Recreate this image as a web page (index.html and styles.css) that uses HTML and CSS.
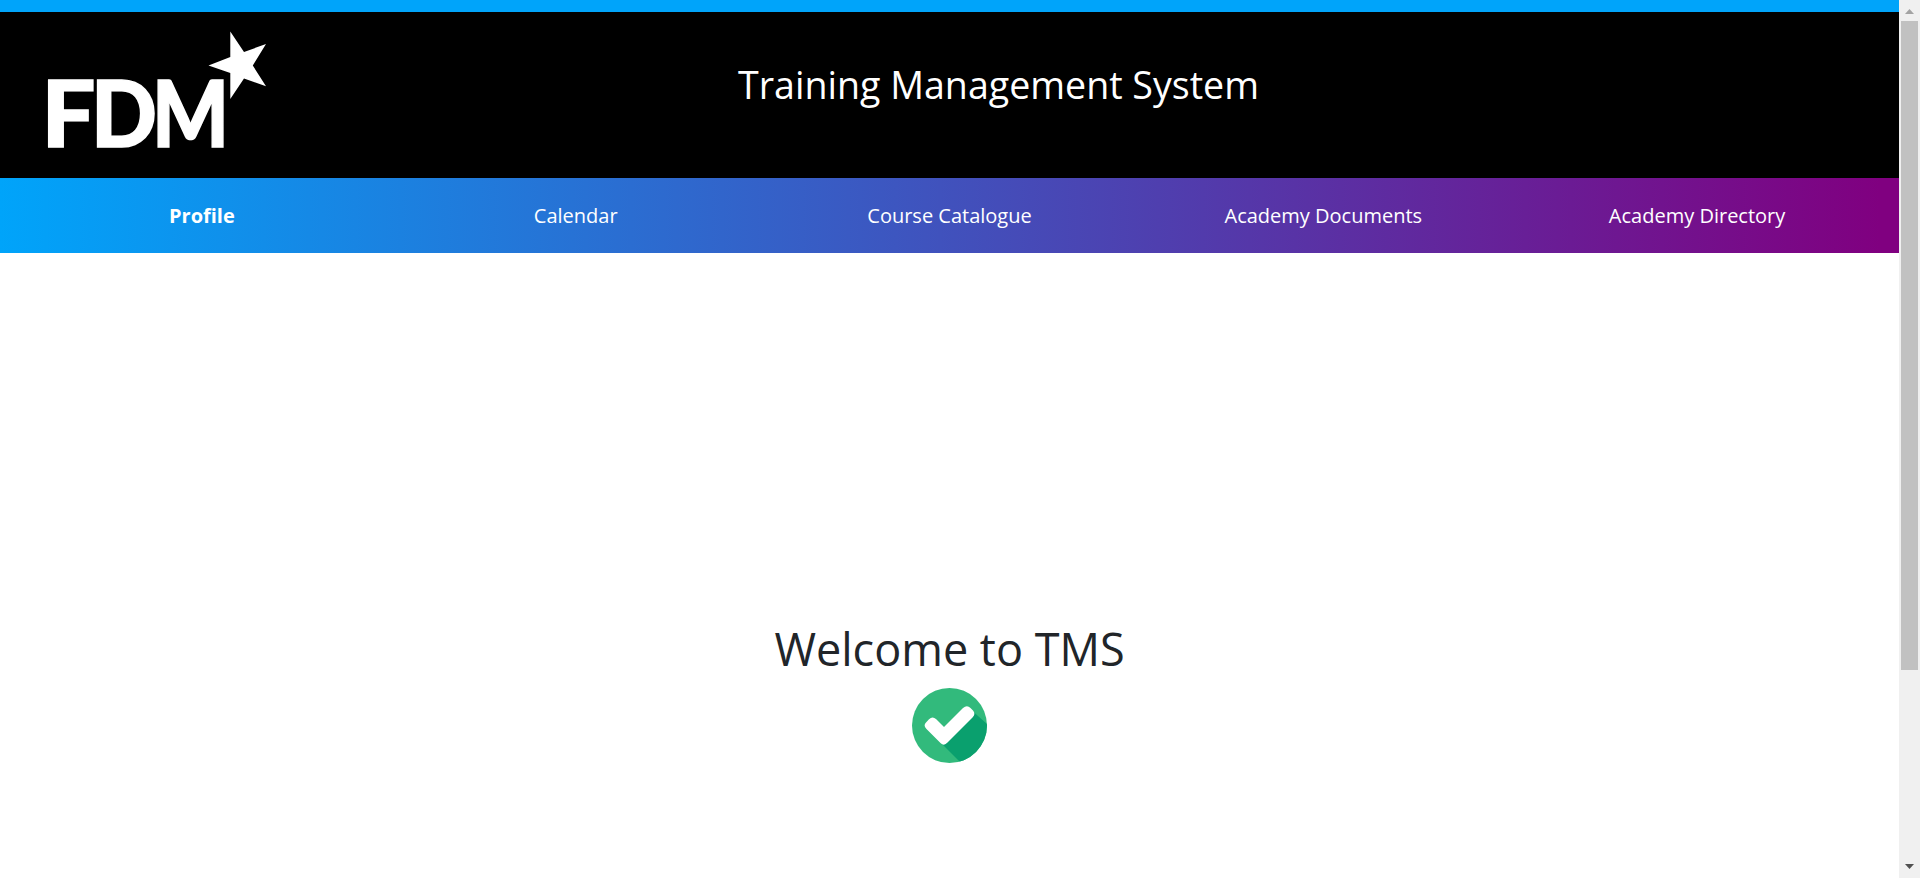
FILE: index.html
```html
<!DOCTYPE html>
<html lang="en">
<head>
<meta charset="utf-8">
<title>Training Management System</title>
<link rel="stylesheet" href="styles.css">
</head>
<body>
<div class="page">
<header class="header">
<svg class="logo" viewBox="0 0 220 120" role="img" aria-label="FDM">
<g class="logo-text">
<text x="-6.500" y="116.500" textLength="54" lengthAdjust="spacingAndGlyphs">F</text>
<text x="43" y="116.500" textLength="66" lengthAdjust="spacingAndGlyphs">D</text>
<text x="104" y="116.500" textLength="77" lengthAdjust="spacingAndGlyphs">M</text>
</g>
<path class="star" d="M182.3 1.5 196 22 218 14 204.8 35.5 218 56.3 196 48.5 182.3 69V43L160.5 35.5 182.3 27Z"/>
</svg>
<h1 class="title">Training Management System</h1>
</header>
<nav class="nav">
<a class="nav-item active">Profile</a>
<a class="nav-item">Calendar</a>
<a class="nav-item">Course Catalogue</a>
<a class="nav-item">Academy Documents</a>
<a class="nav-item">Academy Directory</a>
</nav>
<main class="main">
<h2 class="welcome">Welcome to TMS</h2>
<svg class="check" viewBox="0 0 75 75">
<defs><clipPath id="disc"><circle cx="37.5" cy="37.5" r="37.5"/></clipPath></defs>
<circle cx="37.5" cy="37.5" r="37.5" fill="#32ba7c"/>
<path clip-path="url(#disc)" fill="#0aa06e" d="M30 56 50 76H76V37L61.500 24Z"/>
<path fill="#fff" d="M14 34.500 17 31.200Q20.500 27.700 24 31L32 39 51 20Q55 16.500 58.500 20L61 22.500Q64 26 60.500 29.500L35.500 54.500Q32 58.500 28.500 55L14.500 41Q11 37.500 14 34.500Z"/>
</svg>
</main>
</div>
<aside class="scrollbar">
<svg class="arrow" viewBox="0 0 21 21"><path fill="#a3a3a3" d="M6 14H15L10.500 9Z"/></svg>
<div class="thumb"></div>
<svg class="arrow" viewBox="0 0 21 21"><path fill="#505050" d="M6 7H15L10.500 12Z"/></svg>
</aside>
</body>
</html>
```
FILE: styles.css
```css
* { box-sizing: border-box; }
body {
  margin: 0;
  height: 878px;
  display: flex;
  overflow: hidden;
  background: #fff;
  color: #212529;
  font-family: "Open Sans", sans-serif;
}
.page { width: 1899px; display: flex; flex-direction: column; }
.header {
  height: 178px;
  border-top: 12px solid #00a4fa;
  background: #000;
  display: flex;
  align-items: flex-start;
}
.logo { width: 220px; height: 120px; margin: 18px 0 0 48px; overflow: visible; fill: #fff; }
.logo-text {
  font-family: Lato, sans-serif;
  font-weight: 900;
  font-size: 91px;
  stroke: #fff;
  stroke-width: 1.5px;
}
.title {
  margin: 46px 0 0 470px;
  color: #fff;
  font-size: 37.600px;
  font-weight: 400;
  line-height: 54px;
  white-space: nowrap;
}
.nav {
  height: 75px;
  padding: 0 15px;
  display: grid;
  grid-template-columns: repeat(5, 1fr);
  align-items: center;
  background: linear-gradient(90deg, #00a4fa, purple 99%);
}
.nav-item { color: #fff; font-size: 20px; line-height: 30px; text-align: center; }
.active { font-weight: 700; }
.main { flex: 1; padding-top: 369px; display: flex; flex-direction: column; align-items: center; }
.welcome { margin: 0; font-size: 45px; font-weight: 400; line-height: 54px; white-space: nowrap; }
.check { width: 75px; height: 75px; margin-top: 12px; }
.scrollbar { width: 21px; background: #f0f0f0; display: flex; flex-direction: column; align-items: flex-start; }
.arrow { width: 21px; height: 21px; flex: none; }
.thumb { width: 17px; height: 649px; margin: 0 0 187px 2px; background: #c1c1c1; flex: none; }
```
